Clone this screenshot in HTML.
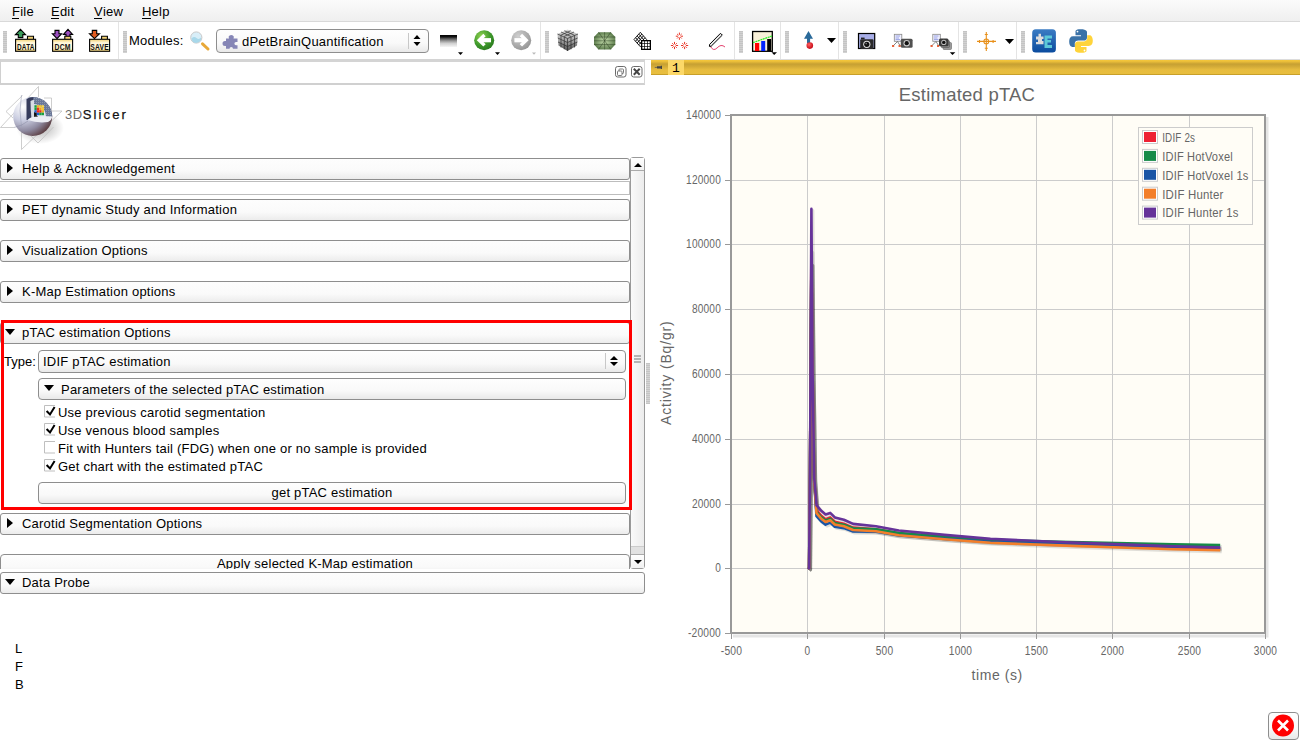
<!DOCTYPE html>
<html><head><meta charset="utf-8">
<style>
*{margin:0;padding:0;box-sizing:border-box}
html,body{width:1300px;height:743px;overflow:hidden;background:#fff;font-family:"Liberation Sans",sans-serif;font-size:13px;color:#000;letter-spacing:0.22px}
.a{position:absolute}
#menu{left:0;top:0;width:1300px;height:22px;background:linear-gradient(#fbfbfb,#efefef);border-bottom:1px solid #d9d9d9}
#menu span{position:absolute;top:4px}
#menu u{text-decoration:none;position:relative}#menu u::after{content:"";position:absolute;left:0;right:1px;top:14px;height:1px;background:#000}
#tb{left:0;top:22px;width:1300px;height:37px;background:#fff}
.sep{position:absolute;top:0;width:1px;height:37px;background:#e4e4e4}
.hdl{position:absolute;top:9px;width:4px;height:22px;background:repeating-linear-gradient(#c4c4c4 0 1px,#d2d2d2 1px 2px)}
.hdr{position:absolute;left:0;width:630px;height:22px;border:1px solid #8e8e8e;border-radius:3px;background:linear-gradient(#fdfdfd,#fafafa 60%,#ececec)}
.hdr .t{position:absolute;left:21px;top:2px}
.tri-r{position:absolute;left:6px;top:4px;width:0;height:0;border-top:5px solid transparent;border-bottom:5px solid transparent;border-left:6px solid #000}
.tri-d{position:absolute;left:4px;top:6px;width:0;height:0;border-left:5px solid transparent;border-right:5px solid transparent;border-top:6px solid #000}
.btn{position:absolute;border:1px solid #8e8e8e;border-radius:4px;background:linear-gradient(#fefefe,#f9f9f9 60%,#e9e9e9)}
.cb{position:absolute;left:44px;width:12px;height:12px;border:1px solid #bdbdbd;border-right-color:#fff}
.cbt{position:absolute;left:58px}
.chk{position:absolute;left:2px;top:-2px;font-size:12px;font-weight:bold;letter-spacing:0}
</style></head><body>

<!-- MENU -->
<div id="menu" class="a">
 <span style="left:12px"><u>F</u>ile</span>
 <span style="left:51px"><u>E</u>dit</span>
 <span style="left:94px"><u>V</u>iew</span>
 <span style="left:142px"><u>H</u>elp</span>
</div>

<!-- TOOLBAR -->
<div id="tb" class="a">
 <div class="hdl" style="left:3px"></div>
 <div class="sep" style="left:118px"></div>
 <div class="hdl" style="left:123px"></div>
 <div class="a" style="left:129px;top:11px">Modules:</div>
 <div class="btn" style="left:216px;top:7px;width:213px;height:24px;border-radius:4px"></div>
 <div class="a" style="left:242px;top:12px">dPetBrainQuantification</div>
 <div class="a" style="left:408px;top:11px;width:1px;height:16px;background:#c8c8c8"></div>
 <div class="sep" style="left:540px"></div>
 <div class="hdl" style="left:545px"></div>
 <div class="sep" style="left:734px"></div>
 <div class="hdl" style="left:739px"></div>
 <div class="sep" style="left:780px"></div>
 <div class="hdl" style="left:785px"></div>
 <div class="sep" style="left:838px"></div>
 <div class="hdl" style="left:843px"></div>
 <div class="sep" style="left:958px"></div>
 <div class="hdl" style="left:963px"></div>
 <div class="sep" style="left:1016px"></div>
 <div class="hdl" style="left:1021px"></div>
 <div id="icons" class="a" style="left:0;top:-22px">
<svg class="a" style="left:0;top:0" width="1300" height="60" viewBox="0 0 1300 60">
<defs>
 <linearGradient id="fold" x1="0" y1="0" x2="0" y2="1"><stop offset="0" stop-color="#f3d270"/><stop offset="0.3" stop-color="#fff8df"/><stop offset="0.75" stop-color="#fff3cf"/><stop offset="1" stop-color="#f0cf6a"/></linearGradient>
 <radialGradient id="grn" cx="0.35" cy="0.3" r="0.75"><stop offset="0" stop-color="#8fd050"/><stop offset="0.6" stop-color="#3f9a2c"/><stop offset="1" stop-color="#2a7a1e"/></radialGradient>
 <radialGradient id="gry" cx="0.35" cy="0.3" r="0.75"><stop offset="0" stop-color="#cfcfcf"/><stop offset="1" stop-color="#959595"/></radialGradient>
 <linearGradient id="grad" x1="0" y1="0" x2="0" y2="1"><stop offset="0" stop-color="#000"/><stop offset="0.15" stop-color="#111"/><stop offset="0.3" stop-color="#555"/><stop offset="0.5" stop-color="#999"/><stop offset="0.7" stop-color="#d0d0d0"/><stop offset="1" stop-color="#f6f6f6"/></linearGradient>
 <linearGradient id="ext" x1="0" y1="0" x2="0" y2="1"><stop offset="0" stop-color="#3b7cc4"/><stop offset="1" stop-color="#0a4b9e"/></linearGradient>
 <radialGradient id="ball" cx="0.4" cy="0.35" r="0.7"><stop offset="0" stop-color="#ff6060"/><stop offset="1" stop-color="#c00010"/></radialGradient>
 <radialGradient id="oct" cx="0.5" cy="0.5" r="0.6"><stop offset="0" stop-color="#c8e0b0"/><stop offset="1" stop-color="#4f7040"/></radialGradient>
 <linearGradient id="cube" x1="0" y1="0" x2="0" y2="1"><stop offset="0" stop-color="#d8d8d8"/><stop offset="0.5" stop-color="#a8a8a8"/><stop offset="1" stop-color="#505050"/></linearGradient>
</defs>
<!-- DATA -->
<g stroke="#000" stroke-width="1.1">
 <path d="M20.5 29.3 L25.6 34.6 H22.8 V37.6 H18.3 V34.6 H15.4 Z" fill="#3a9a5a"/>
 <path d="M27.5 38.9 V36.2 H33.5 V38.9" fill="#f3d270"/>
 <rect x="15.6" y="39.3" width="20" height="12" fill="url(#fold)"/>
</g>
<text x="25.8" y="49.6" font-size="9.6" font-weight="bold" text-anchor="middle" fill="#111" textLength="17.5" lengthAdjust="spacingAndGlyphs">DATA</text>
<!-- DCM -->
<g stroke="#000" stroke-width="1.1">
 <path d="M57 38.6 L52.4 33.7 H55 V30.4 H59 V33.7 H61.6 Z" fill="#9b4fc0"/>
 <path d="M68 29.3 L72.6 34.4 H70 V36.6 H66 V34.4 H63.4 Z" fill="#9b4fc0"/>
 <path d="M64.8 38.9 V36.2 H70.8 V38.9" fill="#f3d270"/>
 <rect x="52.6" y="39.3" width="20" height="12" fill="url(#fold)"/>
</g>
<text x="62.6" y="49.6" font-size="9.6" font-weight="bold" text-anchor="middle" fill="#111" textLength="16" lengthAdjust="spacingAndGlyphs">DCM</text>
<!-- SAVE -->
<g stroke="#000" stroke-width="1.1">
 <path d="M94.5 38.6 L89.5 33.7 H92.3 V30.4 H96.7 V33.7 H99.5 Z" fill="#e05a20"/>
 <path d="M101.6 38.9 V36.2 H107.4 V38.9" fill="#f3d270"/>
 <rect x="89.6" y="39.3" width="20" height="12" fill="url(#fold)"/>
</g>
<text x="99.6" y="49.6" font-size="9.6" font-weight="bold" text-anchor="middle" fill="#111" textLength="18.5" lengthAdjust="spacingAndGlyphs">SAVE</text>
<!-- magnifier -->
<line x1="202.5" y1="43.8" x2="208" y2="49" stroke="#e8a838" stroke-width="3" stroke-linecap="round"/>
<circle cx="196.3" cy="37.5" r="5.6" fill="#d8eef8" stroke="#c8c8c8" stroke-width="1"/>
<path d="M191.5 38.5 Q194 36 196.5 38 T201 37.5 V40 Q199 43 196 43 Q192 42.5 191.5 38.5Z" fill="#a8d8ea"/>
<!-- puzzle -->
<path d="M226 38.5 H229 A2.6 2.3 0 1 1 233.5 38.5 H237.5 V42 H236 A1.6 1.6 0 0 0 236 45.2 H237.5 V48.8 H233 A1.6 1.6 0 0 0 229.5 48.8 H226 V46 H225 A2.2 2.2 0 1 1 225 41 H226 Z" fill="#8686b6"/>
<!-- combo arrows -->
<path d="M413.5 39 L417 35 L420.5 39 Z M413.5 42 L417 46 L420.5 42 Z" fill="#000"/>
<!-- gradient -->
<rect x="440" y="35" width="17" height="12" fill="url(#grad)"/>
<path d="M458 52.3 H463 L460.5 55 Z" fill="#000"/>
<!-- green back -->
<circle cx="484.2" cy="40.2" r="10" fill="url(#grn)"/>
<path d="M484.5 35 L479.2 40.2 L484.5 45.4" fill="none" stroke="#fff" stroke-width="3.4"/><path d="M480 40.2 H491" stroke="#fff" stroke-width="4.2"/>
<path d="M495 52.3 H500 L497.5 55 Z" fill="#000"/>
<!-- gray fwd -->
<circle cx="521.2" cy="40.2" r="10" fill="url(#gry)"/>
<path d="M520.9 35 L526.2 40.2 L520.9 45.4" fill="none" stroke="#fff" stroke-width="3.4"/><path d="M525.4 40.2 H514.4" stroke="#fff" stroke-width="4.2"/>
<path d="M532 52.5 H536 L534 54.8 Z" fill="#bbb"/>
<!-- cube -->
<path d="M567.5 29.5 L578 34 L577 45.5 L567.5 51 L558.5 45.5 L557.5 34 Z" fill="url(#cube)"/>
<g stroke="#222" stroke-width="0.8" fill="none" opacity="0.8">
 <path d="M557.5 34 L567.5 38.5 L578 34 M567.5 38.5 V51"/>
 <path d="M561 35.5 V47.5 M564.3 37 V49.3 M571 37 V49.3 M574.5 35.5 V47.5"/>
 <path d="M557.8 38 L567.5 42.5 L577.7 38 M558 42 L567.5 46.5 L577.4 42"/>
 <path d="M561 32 L571 36.5 M564.3 30.7 L574.5 35.3 M574 32 L564 36.5 M570.7 30.7 L560.7 35.3"/>
</g>
<!-- octagon -->
<path d="M598.5 32.2 H610.8 L615.3 37 V44.6 L610.8 49.4 H598.5 L594 44.6 V37 Z" fill="url(#oct)"/>
<g stroke="#2a4020" stroke-width="0.7" fill="none" opacity="0.7"><path d="M604.6 32.2 V49.4 M594 40.8 H615.3 M598.5 32.2 L610.8 49.4 M610.8 32.2 L598.5 49.4 M594 37 H615.3 M594 44.6 H615.3"/></g>
<!-- grid -->
<g fill="none" stroke="#000" stroke-width="0.9">
 <path d="M634 39.5 L640.3 32.3 L646.6 39.5 L640.3 46.7 Z M635.6 37.7 L641.9 44.9 M637.2 35.9 L643.5 43.1 M638.8 34.1 L645.1 41.3 M645 37.7 L638.7 44.9 M643.4 35.9 L637.1 43.1 M641.8 34.1 L635.5 41.3"/>
</g>
<rect x="641" y="40" width="10" height="10" fill="#000"/>
<g fill="#fff"><rect x="642.3" y="41.3" width="2" height="2"/><rect x="645" y="41.3" width="2" height="2"/><rect x="647.7" y="41.3" width="2" height="2"/><rect x="642.3" y="44" width="2" height="2"/><rect x="645" y="44" width="2" height="2"/><rect x="647.7" y="44" width="2" height="2"/><rect x="642.3" y="46.7" width="2" height="2"/><rect x="645" y="46.7" width="2" height="2"/><rect x="647.7" y="46.7" width="2" height="2"/></g>
<!-- red stars -->
<g stroke="#e82818" stroke-width="0.95" fill="none" stroke-linecap="butt">
<path d="M680.70 36.20 L683.00 36.20 M680.32 37.12 L681.66 38.46 M679.40 37.50 L679.40 39.80 M678.48 37.12 L677.14 38.46 M678.10 36.20 L675.80 36.20 M678.48 35.28 L677.14 33.94 M679.40 34.90 L679.40 32.60 M680.32 35.28 L681.66 33.94"/>
<path d="M675.80 45.50 L678.10 45.50 M675.42 46.42 L676.76 47.76 M674.50 46.80 L674.50 49.10 M673.58 46.42 L672.24 47.76 M673.20 45.50 L670.90 45.50 M673.58 44.58 L672.24 43.24 M674.50 44.20 L674.50 41.90 M675.42 44.58 L676.76 43.24"/>
<path d="M685.90 45.50 L688.20 45.50 M685.52 46.42 L686.86 47.76 M684.60 46.80 L684.60 49.10 M683.68 46.42 L682.34 47.76 M683.30 45.50 L681.00 45.50 M683.68 44.58 L682.34 43.24 M684.60 44.20 L684.60 41.90 M685.52 44.58 L686.86 43.24"/>
</g>
<!-- pen -->
<path d="M710 45.5 Q713 52 717 48 Q721 43.5 725 47" fill="none" stroke="#e03060" stroke-width="0.9"/>
<path d="M720.5 33.3 L722.3 35.1 L711.2 46.2 L709.4 46.4 L709.6 44.4 Z" fill="#e8e8e8" stroke="#000" stroke-width="1"/>
<!-- chart icon -->
<rect x="752.6" y="31.5" width="19.7" height="19.8" fill="#f8f0d8" stroke="#000" stroke-width="1.3"/>
<rect x="755" y="43" width="4.2" height="8" fill="#ff0000"/>
<rect x="761.2" y="41" width="4" height="10" fill="#0022ff"/>
<rect x="767.2" y="39" width="4" height="12" fill="#000"/>
<line x1="753" y1="42.6" x2="772" y2="36" stroke="#22ee22" stroke-width="1.2" stroke-dasharray="2 0.6"/>
<path d="M771.5 52.2 H777 L774.2 55 Z" fill="#000"/>
<!-- arrow with ball -->
<path d="M808.5 31 L813 38.7 H810.1 V43 H807 V38.7 H804 Z" fill="#2a6a9a"/>
<circle cx="809.8" cy="45.6" r="3.3" fill="url(#ball)"/>
<path d="M827 38 H836 L831.5 43 Z" fill="#000"/>
<!-- camera 1 -->
<rect x="858.5" y="33.5" width="16.2" height="15" fill="#a8aee8" stroke="#000" stroke-width="1.2"/>
<rect x="861" y="37.6" width="3.6" height="1.6" fill="#222"/>
<rect x="860.2" y="39.3" width="13.4" height="9.6" rx="1.2" fill="#2a2a2a"/>
<circle cx="866.8" cy="44.3" r="3.6" fill="#e0e0e0"/><circle cx="866.8" cy="44.3" r="2.6" fill="#111"/><circle cx="866.2" cy="43.6" r="0.8" fill="#777"/>
<!-- camera 2 -->
<rect x="894.3" y="34.3" width="7.5" height="7" fill="#f0f0ff" stroke="#888" stroke-width="0.8"/>
<path d="M895.5 36 H900 M895.5 38 H899 M895.5 39.6 H900" stroke="#6070d0" stroke-width="0.6"/>
<path d="M897.5 41.5 L893.5 45.5 M897.5 41.5 L900 45.5" stroke="#666" stroke-width="0.8"/>
<rect x="892" y="45.2" width="2.2" height="1.6" fill="#e04010"/><rect x="898.5" y="45.2" width="2.2" height="1.6" fill="#e04010"/>
<rect x="900.8" y="38.7" width="11.8" height="9" rx="1.5" fill="#505050"/>
<circle cx="906.7" cy="43.2" r="3.2" fill="#c8c8c8"/><circle cx="906.7" cy="43.2" r="2.1" fill="#111"/>
<!-- camera 3 -->
<rect x="932.8" y="34.3" width="7.5" height="7" fill="#f0f0ff" stroke="#888" stroke-width="0.8"/>
<path d="M934 36 H938.5 M934 38 H937.5 M934 39.6 H938.5" stroke="#6070d0" stroke-width="0.6"/>
<path d="M936 41.5 L932 45.5 M936 41.5 L938.5 45.5" stroke="#666" stroke-width="0.8"/>
<rect x="930.5" y="45.2" width="2.2" height="1.6" fill="#e04010"/><rect x="937" y="45.2" width="2.2" height="1.6" fill="#e04010"/>
<rect x="943" y="42.5" width="8.5" height="7" rx="1" fill="#9a9a9a" stroke="#666" stroke-width="0.6"/>
<rect x="941" y="40.5" width="8.5" height="7" rx="1" fill="#8a8a8a" stroke="#555" stroke-width="0.6"/>
<rect x="939" y="38.6" width="9.5" height="7.6" rx="1.5" fill="#3a3a3a"/>
<circle cx="943.8" cy="42.4" r="2.6" fill="#bbb"/><circle cx="943.8" cy="42.4" r="1.7" fill="#111"/>
<path d="M949.8 52.2 H955.3 L952.5 55 Z" fill="#000"/>
<!-- crosshair -->
<g stroke="#e8901a" stroke-width="1.1" fill="none">
 <path d="M986.3 32 V51 M977 41.4 H996"/>
 <circle cx="986.3" cy="41.4" r="2.4"/>
 <path d="M984.8 34.5 H987.8 M984.8 48.3 H987.8 M979.5 39.9 V42.9 M993.1 39.9 V42.9"/>
</g>
<path d="M1005 39 H1014 L1009.5 44 Z" fill="#000"/>
<!-- extension -->
<rect x="1032.2" y="29.2" width="23.7" height="23.3" rx="3.5" fill="url(#ext)"/>
<path d="M1036 36.5 H1038.5 V33.8 H1041 V36.5 H1043.5 V39 H1042 V41 H1043.5 V44.3 H1036 V42 H1038 V39.5 H1036 Z" fill="#dcdcdc"/>
<path d="M1044.5 35.5 H1052 V38.5 H1047.5 V40 H1051 V42.5 H1047.5 V45 H1052 V48 H1044.5 Z" fill="#5cc8d8"/>
<!-- python -->
<path d="M1080.5 29.3 C1075 29.3 1075.5 31.6 1075.5 31.6 V35.2 H1081 V36.2 H1073.2 C1073.2 36.2 1069.2 35.8 1069.2 41.5 C1069.2 47.2 1072.7 46.9 1072.7 46.9 H1074.8 V44 C1074.8 44 1074.6 40.6 1078.2 40.6 H1083.8 C1083.8 40.6 1087 40.7 1087 37.5 V32.2 C1087 32.2 1087.5 29.3 1080.5 29.3 Z" fill="#3a72a8"/>
<circle cx="1077.5" cy="31.6" r="0.9" fill="#fff"/>
<path d="M1081.5 52.8 C1087 52.8 1086.5 50.5 1086.5 50.5 V46.9 H1081 V45.9 H1088.8 C1088.8 45.9 1092.8 46.3 1092.8 40.6 C1092.8 34.9 1089.3 35.2 1089.3 35.2 H1087.2 V38.1 C1087.2 38.1 1087.4 41.5 1083.8 41.5 H1078.2 C1078.2 41.5 1075 41.4 1075 44.6 V49.9 C1075 49.9 1074.5 52.8 1081.5 52.8 Z" fill="#ffd43b"/>
<circle cx="1084.5" cy="50.5" r="0.9" fill="#fff"/>
</svg>
</div>
</div>
<div class="a" style="left:0;top:59px;width:1300px;height:1px;background:#dcdcdc"></div>

<!-- LEFT PANEL -->
<div class="a" style="left:0;top:59px;width:645px;height:26px;border-top:3px solid #d4d4d4;border-bottom:2px solid #d0d0d0;border-left:1px solid #d0d0d0;border-right:1px solid #d6d6d6;background:#fff"></div>

<svg class="a" style="left:612px;top:63px" width="34" height="16" viewBox="612 63 34 16">
<rect x="615.5" y="66.5" width="10.5" height="10.5" rx="2.2" fill="#fff" stroke="#6a6a6a" stroke-width="1"/>
<rect x="619" y="69" width="4.5" height="4.5" rx="0.8" fill="none" stroke="#6a6a6a" stroke-width="0.9"/>
<rect x="617.5" y="71" width="4.5" height="4.5" rx="0.8" fill="#fff" stroke="#6a6a6a" stroke-width="0.9"/>
<rect x="631.5" y="66.5" width="10.5" height="10.5" rx="2.2" fill="#fff" stroke="#6a6a6a" stroke-width="1"/>
<path d="M633.8 68.8 L639.7 74.7 M639.7 68.8 L633.8 74.7" stroke="#444" stroke-width="2"/>
</svg>
<!--LOGO--><div id="logo">
<svg class="a" style="left:0;top:84px" width="70" height="72" viewBox="0 84 70 72">
<defs>
 <radialGradient id="sph" cx="0.25" cy="0.25" r="1"><stop offset="0" stop-color="#ffffff"/><stop offset="0.35" stop-color="#c9cce0"/><stop offset="0.62" stop-color="#8e8aa0"/><stop offset="0.85" stop-color="#5a3c40"/><stop offset="1" stop-color="#4a2a2a"/></radialGradient>
 <radialGradient id="shd" cx="0.5" cy="0.5" r="0.5"><stop offset="0" stop-color="#000" stop-opacity="0.3"/><stop offset="1" stop-color="#000" stop-opacity="0"/></radialGradient>
 <pattern id="gp" width="2" height="2" patternUnits="userSpaceOnUse"><rect width="2" height="2" fill="#6a7898"/><rect width="1" height="1" fill="#8a96b0"/></pattern>
</defs>
<ellipse cx="40" cy="128" rx="24" ry="16" fill="url(#shd)"/>
<g fill="none" stroke="#bdbdbd" stroke-width="0.75">
 <path d="M38.5 86.5 L0.5 127.5 H14"/>
 <path d="M38.5 86.5 V97"/>
 <path d="M22.5 95.5 L6 111.5 L13 118"/>
 <path d="M21.5 127 V149.5 L62 111 H52"/>
 <path d="M22 127 L38 143 L53.5 127"/>
 <path d="M44 98 H51.5 V111"/>
</g>
<circle cx="32.7" cy="116.5" r="19.5" fill="url(#sph)"/>
<!-- cutaway quadrant -->
<path d="M28 98 Q30 97 32.7 97 A19.5 19.5 0 0 1 52.2 116.5 Q45 121 28 120 Z" fill="url(#gp)"/>
<path d="M33 117 V104 A13 13 0 0 1 46 117 Z" fill="#e4e6ee"/><path d="M33 117 V110 L38 117 Z" fill="#202020"/>
<path d="M26.5 99 Q30 97 33.5 97.3 Q31 106 31.5 120 L26.5 120 Z" fill="#363c5c"/>
<path d="M30.5 101 Q32 100 34 100 V118 L31.5 118 Q30.5 110 30.5 101Z" fill="#d8dce4"/>
<g>
 <rect x="34.4" y="105.2" width="2.4" height="2.5" fill="#18a040"/><rect x="36.8" y="105.2" width="2.4" height="2.5" fill="#f0b020"/><rect x="39.2" y="105.2" width="2.4" height="2.5" fill="#f8c830"/><rect x="41.6" y="105.2" width="2.4" height="2.5" fill="#f8d850"/>
 <rect x="34.4" y="107.7" width="2.4" height="2.5" fill="#18a040"/><rect x="36.8" y="107.7" width="2.4" height="2.5" fill="#e83020"/><rect x="39.2" y="107.7" width="2.4" height="2.5" fill="#f0a020"/><rect x="41.6" y="107.7" width="2.4" height="2.5" fill="#f8c830"/>
 <rect x="34.4" y="110.2" width="2.4" height="2.5" fill="#2060d0"/><rect x="36.8" y="110.2" width="2.4" height="2.5" fill="#ff2010"/><rect x="39.2" y="110.2" width="2.4" height="2.5" fill="#e83020"/><rect x="41.6" y="110.2" width="2.4" height="2.5" fill="#f0b020"/>
 <rect x="34.4" y="112.7" width="2.4" height="2.5" fill="#101010"/><rect x="36.8" y="112.7" width="2.4" height="2.5" fill="#2060d0"/><rect x="39.2" y="112.7" width="2.4" height="2.5" fill="#18a040"/><rect x="41.6" y="112.7" width="2.4" height="2.5" fill="#18a040"/>
</g>
<path d="M27.5 120 Q31 116.5 36 116.8 Q46 116 52.2 116.5 Q51.5 120.5 48 122 Q38 123.5 27.5 120Z" fill="#eceef4"/>
<path d="M21.5 95 Q18.5 110 21.5 127" fill="none" stroke="#9ea2b8" stroke-width="0.6"/>
<path d="M14 127.5 Q22 126 28 121" fill="none" stroke="#8e90a8" stroke-width="0.6"/>
</svg>
</div><!--/LOGO-->
<div class="a" style="left:65px;top:107px;font-size:13px;letter-spacing:0.6px;color:#111;white-space:nowrap"><span style="color:#6a6a6a">3D</span><span style="letter-spacing:2.1px;-webkit-text-stroke:0.25px #111">Slicer</span></div>

<div class="hdr" style="top:158px"><div class="tri-r"></div><span class="t">Help &amp; Acknowledgement</span></div>
<div class="a" style="left:0;top:181px;width:630px;height:14px;border-top:1px solid #bdbdbd;border-bottom:1px solid #bdbdbd;border-right:1px solid #bdbdbd"></div>
<div class="hdr" style="top:199px"><div class="tri-r"></div><span class="t">PET dynamic Study and Information</span></div>
<div class="hdr" style="top:240px"><div class="tri-r"></div><span class="t">Visualization Options</span></div>
<div class="hdr" style="top:281px"><div class="tri-r"></div><span class="t">K-Map Estimation options</span></div>
<div class="hdr" style="top:322px;height:22px"><div class="tri-d"></div><span class="t">pTAC estimation Options</span></div>

<div class="a" style="left:4px;top:354px;letter-spacing:0">Type:</div>
<div class="btn" style="left:38px;top:350px;width:588px;height:23px"></div>
<div class="a" style="left:43px;top:354px">IDIF pTAC estimation</div>
<div class="a" style="left:605px;top:353px;width:1px;height:16px;background:#c8c8c8"></div>
<div class="a" style="left:610px;top:356px;border-left:4px solid transparent;border-right:4px solid transparent;border-bottom:4px solid #000"></div>
<div class="a" style="left:610px;top:362px;border-left:4px solid transparent;border-right:4px solid transparent;border-top:4px solid #000"></div>

<div class="btn" style="left:38px;top:378px;width:588px;height:22px"><div class="tri-d" style="left:5px"></div><span class="a" style="left:22px;top:3px">Parameters of the selected pTAC estimation</span></div>

<svg class="a" style="left:40px;top:400px" width="20" height="80" viewBox="40 400 20 80">
<path d="M55 405.5 H44.5 V417.0 H55" fill="none" stroke="#bfbfbf" stroke-width="1"/>
<path d="M46.6 411.0 L50 414.5 L54.6 407.0" fill="none" stroke="#000" stroke-width="2"/>
<path d="M55 423.5 H44.5 V435.0 H55" fill="none" stroke="#bfbfbf" stroke-width="1"/>
<path d="M46.6 429.0 L50 432.5 L54.6 425.0" fill="none" stroke="#000" stroke-width="2"/>
<path d="M55 441.5 H44.5 V453.0 H55" fill="none" stroke="#bfbfbf" stroke-width="1"/>
<path d="M55 459.5 H44.5 V471.0 H55" fill="none" stroke="#bfbfbf" stroke-width="1"/>
<path d="M46.6 465.0 L50 468.5 L54.6 461.0" fill="none" stroke="#000" stroke-width="2"/>
</svg>
<div class="cbt" style="top:405px">Use previous carotid segmentation</div>
<div class="cbt" style="top:423px">Use venous blood samples</div>
<div class="cbt" style="top:441px">Fit with Hunters tail (FDG) when one or no sample is provided</div>
<div class="cbt" style="top:459px">Get chart with the estimated pTAC</div>

<div class="btn" style="left:38px;top:482px;width:588px;height:22px"></div>
<div class="a" style="left:38px;top:485px;width:588px;text-align:center">get pTAC estimation</div>

<div class="a" style="left:1px;top:320px;width:631px;height:190px;border:3px solid #ff0000;z-index:5"></div>

<div class="hdr" style="top:513px"><div class="tri-r"></div><span class="t">Carotid Segmentation Options</span></div>

<div class="a" style="left:0;top:554px;width:630px;height:15px;overflow:hidden">
 <div class="btn" style="left:0;top:0;width:630px;height:22px"></div>
 <div class="a" style="left:0;top:2px;width:630px;text-align:center">Apply selected K-Map estimation</div>
</div>

<!-- scrollbar -->
<div class="a" style="left:630px;top:157px;width:15px;height:412px;border:1px solid #9a9a9a;border-radius:3px;background:linear-gradient(90deg,#fafafa,#ececec)"></div>
<div class="a" style="left:631px;top:158px;width:13px;height:13px;border-bottom:1px solid #aaa;background:linear-gradient(#fff,#f1f1f1)"></div>
<div class="a" style="left:633.5px;top:162.5px;border-left:4px solid transparent;border-right:4px solid transparent;border-bottom:4.5px solid #000"></div>
<div class="a" style="left:631px;top:546px;width:13px;height:8px;background:#e2e2e2;border-top:1px solid #ccc"></div>
<div class="a" style="left:631px;top:554px;width:13px;height:14px;border-top:1px solid #aaa;background:linear-gradient(#fff,#f1f1f1)"></div>
<div class="a" style="left:633.5px;top:559.5px;border-left:4px solid transparent;border-right:4px solid transparent;border-top:4.5px solid #000"></div>
<div class="a" style="left:634px;top:355px;width:7px;height:8px;background:repeating-linear-gradient(#b4b4b4 0 1.5px,transparent 1.5px 3px)"></div>

<div class="hdr" style="top:572px;width:645px;height:22px"><div class="tri-d"></div><span class="t">Data Probe</span></div>

<div class="a" style="left:15px;top:641px">L</div>
<div class="a" style="left:15px;top:659px">F</div>
<div class="a" style="left:15px;top:677px">B</div>

<!-- splitter -->
<div class="a" style="left:646px;top:363px;width:4px;height:41px;background:repeating-linear-gradient(#c4c4c4 0 1px,#d4d4d4 1px 2px)"></div>

<!-- VIEW BAR -->
<div class="a" style="left:651px;top:60px;width:649px;height:15px;background:linear-gradient(#f4c73b 0%,#efc13a 8%,#c6a033 27%,#d4ac38 45%,#e7bc3f 65%,#e8be3e 90%,#b8901f 100%)"></div>
<div class="a" style="left:668px;top:60px;width:16px;height:15px;background:#fcd868"></div>
<div class="a" style="left:672px;top:61px;font-family:'Liberation Mono',monospace;font-size:13px;letter-spacing:0">1</div>
<svg class="a" style="left:650px;top:62px" width="16" height="10" viewBox="650 62 16 10"><path d="M654.8 67.4 H657.5" stroke="#555" stroke-width="0.8"/><path d="M657 66.2 H661 V68.6 H657 Z M660.8 65.8 H662 V69 H660.8 Z" fill="#444"/></svg>

<div id="chart">
<svg class="a" style="left:0;top:0" width="1300" height="743" viewBox="0 0 1300 743">
<rect x="731" y="115" width="534" height="518" fill="#fffdf6"/>
<line x1="807.5" y1="116" x2="807.5" y2="632" stroke="#cccccc" stroke-width="1"/>
<line x1="884.5" y1="116" x2="884.5" y2="632" stroke="#cccccc" stroke-width="1"/>
<line x1="960.5" y1="116" x2="960.5" y2="632" stroke="#cccccc" stroke-width="1"/>
<line x1="1036.5" y1="116" x2="1036.5" y2="632" stroke="#cccccc" stroke-width="1"/>
<line x1="1112.5" y1="116" x2="1112.5" y2="632" stroke="#cccccc" stroke-width="1"/>
<line x1="1189.5" y1="116" x2="1189.5" y2="632" stroke="#cccccc" stroke-width="1"/>
<line x1="732" y1="568.5" x2="1264" y2="568.5" stroke="#cccccc" stroke-width="1"/>
<line x1="732" y1="504.5" x2="1264" y2="504.5" stroke="#cccccc" stroke-width="1"/>
<line x1="732" y1="439.5" x2="1264" y2="439.5" stroke="#cccccc" stroke-width="1"/>
<line x1="732" y1="374.5" x2="1264" y2="374.5" stroke="#cccccc" stroke-width="1"/>
<line x1="732" y1="309.5" x2="1264" y2="309.5" stroke="#cccccc" stroke-width="1"/>
<line x1="732" y1="244.5" x2="1264" y2="244.5" stroke="#cccccc" stroke-width="1"/>
<line x1="732" y1="180.5" x2="1264" y2="180.5" stroke="#cccccc" stroke-width="1"/>
<path d="M1267 117 V636 H733" fill="none" stroke="#000" stroke-opacity="0.1" stroke-width="3"/>
<rect x="731" y="115" width="534" height="518" fill="none" stroke="#999999" stroke-width="2"/>
<line x1="725" y1="633.5" x2="730" y2="633.5" stroke="#999" stroke-width="1"/>
<text x="721" y="636.8" text-anchor="end" font-size="12" fill="#666" textLength="33.0" lengthAdjust="spacingAndGlyphs">-20000</text>
<line x1="725" y1="568.5" x2="730" y2="568.5" stroke="#999" stroke-width="1"/>
<text x="721" y="571.8" text-anchor="end" font-size="12" fill="#666" textLength="5.8" lengthAdjust="spacingAndGlyphs">0</text>
<line x1="725" y1="504.5" x2="730" y2="504.5" stroke="#999" stroke-width="1"/>
<text x="721" y="507.8" text-anchor="end" font-size="12" fill="#666" textLength="29.1" lengthAdjust="spacingAndGlyphs">20000</text>
<line x1="725" y1="439.5" x2="730" y2="439.5" stroke="#999" stroke-width="1"/>
<text x="721" y="442.8" text-anchor="end" font-size="12" fill="#666" textLength="29.1" lengthAdjust="spacingAndGlyphs">40000</text>
<line x1="725" y1="374.5" x2="730" y2="374.5" stroke="#999" stroke-width="1"/>
<text x="721" y="377.8" text-anchor="end" font-size="12" fill="#666" textLength="29.1" lengthAdjust="spacingAndGlyphs">60000</text>
<line x1="725" y1="309.5" x2="730" y2="309.5" stroke="#999" stroke-width="1"/>
<text x="721" y="312.8" text-anchor="end" font-size="12" fill="#666" textLength="29.1" lengthAdjust="spacingAndGlyphs">80000</text>
<line x1="725" y1="244.5" x2="730" y2="244.5" stroke="#999" stroke-width="1"/>
<text x="721" y="247.8" text-anchor="end" font-size="12" fill="#666" textLength="34.9" lengthAdjust="spacingAndGlyphs">100000</text>
<line x1="725" y1="180.5" x2="730" y2="180.5" stroke="#999" stroke-width="1"/>
<text x="721" y="183.8" text-anchor="end" font-size="12" fill="#666" textLength="34.9" lengthAdjust="spacingAndGlyphs">120000</text>
<line x1="725" y1="115.5" x2="730" y2="115.5" stroke="#999" stroke-width="1"/>
<text x="721" y="118.8" text-anchor="end" font-size="12" fill="#666" textLength="34.9" lengthAdjust="spacingAndGlyphs">140000</text>
<line x1="731.5" y1="634" x2="731.5" y2="639" stroke="#999" stroke-width="1"/>
<text x="731.5" y="654.8" text-anchor="middle" font-size="12" fill="#666" textLength="21.4" lengthAdjust="spacingAndGlyphs">-500</text>
<line x1="807.5" y1="634" x2="807.5" y2="639" stroke="#999" stroke-width="1"/>
<text x="807.5" y="654.8" text-anchor="middle" font-size="12" fill="#666" textLength="5.8" lengthAdjust="spacingAndGlyphs">0</text>
<line x1="884.5" y1="634" x2="884.5" y2="639" stroke="#999" stroke-width="1"/>
<text x="884.5" y="654.8" text-anchor="middle" font-size="12" fill="#666" textLength="17.5" lengthAdjust="spacingAndGlyphs">500</text>
<line x1="960.5" y1="634" x2="960.5" y2="639" stroke="#999" stroke-width="1"/>
<text x="960.5" y="654.8" text-anchor="middle" font-size="12" fill="#666" textLength="23.3" lengthAdjust="spacingAndGlyphs">1000</text>
<line x1="1036.5" y1="634" x2="1036.5" y2="639" stroke="#999" stroke-width="1"/>
<text x="1036.5" y="654.8" text-anchor="middle" font-size="12" fill="#666" textLength="23.3" lengthAdjust="spacingAndGlyphs">1500</text>
<line x1="1112.5" y1="634" x2="1112.5" y2="639" stroke="#999" stroke-width="1"/>
<text x="1112.5" y="654.8" text-anchor="middle" font-size="12" fill="#666" textLength="23.3" lengthAdjust="spacingAndGlyphs">2000</text>
<line x1="1189.5" y1="634" x2="1189.5" y2="639" stroke="#999" stroke-width="1"/>
<text x="1189.5" y="654.8" text-anchor="middle" font-size="12" fill="#666" textLength="23.3" lengthAdjust="spacingAndGlyphs">2500</text>
<line x1="1265.5" y1="634" x2="1265.5" y2="639" stroke="#999" stroke-width="1"/>
<text x="1265.5" y="654.8" text-anchor="middle" font-size="12" fill="#666" textLength="23.3" lengthAdjust="spacingAndGlyphs">3000</text>
<polyline points="808.1,569.2 809.1,568.2 810.0,471.1 811.4,251.0 812.6,374.0 814.2,479.6 816.5,510.1 821.0,515.5 825.6,519.2 830.2,517.4 834.8,521.8 843.9,523.8 853.1,527.6 876.0,529.3 898.8,533.4 944.6,537.5 990.4,541.2 1059.0,544.0 1127.7,546.2 1173.5,547.5 1220.2,548.5" fill="none" stroke="#000" stroke-opacity="0.12" stroke-width="3" stroke-linejoin="round" transform="translate(1.5,1.5)"/>
<polyline points="808.1,569.2 809.1,568.2 810.0,471.1 811.4,263.9 812.6,374.0 814.2,480.3 816.5,511.8 821.0,517.0 825.6,520.6 830.2,518.7 834.8,523.0 843.9,524.7 853.1,528.3 876.0,529.3 898.8,533.1 944.6,536.6 990.4,539.8 1059.0,541.7 1127.7,543.4 1173.5,544.4 1220.2,545.1" fill="none" stroke="#000" stroke-opacity="0.12" stroke-width="3" stroke-linejoin="round" transform="translate(1.5,1.5)"/>
<polyline points="808.1,569.2 809.1,568.2 810.0,471.1 811.4,263.9 812.6,374.0 814.2,482.0 816.5,516.1 821.0,521.2 825.6,524.6 830.2,522.6 834.8,526.7 843.9,528.1 853.1,531.5 876.0,531.8 898.8,535.5 944.6,538.9 990.4,541.9 1059.0,543.8 1127.7,545.6 1173.5,546.7 1220.2,547.5" fill="none" stroke="#000" stroke-opacity="0.12" stroke-width="3" stroke-linejoin="round" transform="translate(1.5,1.5)"/>
<polyline points="808.1,569.2 809.1,568.2 810.0,471.1 811.4,263.9 812.6,374.0 814.2,480.8 816.5,513.1 821.0,518.4 825.6,522.0 830.2,520.2 834.8,524.5 843.9,526.3 853.1,530.0 876.0,531.3 898.8,535.3 944.6,539.3 990.4,542.8 1059.0,545.4 1127.7,547.8 1173.5,549.2 1220.2,550.3" fill="none" stroke="#000" stroke-opacity="0.12" stroke-width="3" stroke-linejoin="round" transform="translate(1.5,1.5)"/>
<polyline points="808.1,569.2 809.1,568.2 810.0,471.1 811.4,208.9 812.6,374.0 814.2,477.6 816.5,505.1 821.0,510.6 825.6,514.5 830.2,512.9 834.8,517.4 843.9,519.7 853.1,523.9 876.0,526.3 898.8,530.5 944.6,534.9 990.4,538.9 1059.0,542.0 1127.7,544.6 1173.5,546.2 1220.2,547.5" fill="none" stroke="#000" stroke-opacity="0.12" stroke-width="3" stroke-linejoin="round" transform="translate(1.5,1.5)"/>
<polyline points="808.1,569.2 809.1,568.2 810.0,471.1 811.4,251.0 812.6,374.0 814.2,479.6 816.5,510.1 821.0,515.5 825.6,519.2 830.2,517.4 834.8,521.8 843.9,523.8 853.1,527.6 876.0,529.3 898.8,533.4 944.6,537.5 990.4,541.2 1059.0,544.0 1127.7,546.2 1173.5,547.5 1220.2,548.5" fill="none" stroke="#ee2233" stroke-width="2.6" stroke-linejoin="round"/>
<polyline points="808.1,569.2 809.1,568.2 810.0,471.1 811.4,263.9 812.6,374.0 814.2,480.3 816.5,511.8 821.0,517.0 825.6,520.6 830.2,518.7 834.8,523.0 843.9,524.7 853.1,528.3 876.0,529.3 898.8,533.1 944.6,536.6 990.4,539.8 1059.0,541.7 1127.7,543.4 1173.5,544.4 1220.2,545.1" fill="none" stroke="#168a48" stroke-width="2.6" stroke-linejoin="round"/>
<polyline points="808.1,569.2 809.1,568.2 810.0,471.1 811.4,263.9 812.6,374.0 814.2,482.0 816.5,516.1 821.0,521.2 825.6,524.6 830.2,522.6 834.8,526.7 843.9,528.1 853.1,531.5 876.0,531.8 898.8,535.5 944.6,538.9 990.4,541.9 1059.0,543.8 1127.7,545.6 1173.5,546.7 1220.2,547.5" fill="none" stroke="#1a55a5" stroke-width="2.6" stroke-linejoin="round"/>
<polyline points="808.1,569.2 809.1,568.2 810.0,471.1 811.4,263.9 812.6,374.0 814.2,480.8 816.5,513.1 821.0,518.4 825.6,522.0 830.2,520.2 834.8,524.5 843.9,526.3 853.1,530.0 876.0,531.3 898.8,535.3 944.6,539.3 990.4,542.8 1059.0,545.4 1127.7,547.8 1173.5,549.2 1220.2,550.3" fill="none" stroke="#f37f2a" stroke-width="2.6" stroke-linejoin="round"/>
<polyline points="808.1,569.2 809.1,568.2 810.0,471.1 811.4,208.9 812.6,374.0 814.2,477.6 816.5,505.1 821.0,510.6 825.6,514.5 830.2,512.9 834.8,517.4 843.9,519.7 853.1,523.9 876.0,526.3 898.8,530.5 944.6,534.9 990.4,538.9 1059.0,542.0 1127.7,544.6 1173.5,546.2 1220.2,547.5" fill="none" stroke="#663399" stroke-width="2.6" stroke-linejoin="round"/>
<text x="967" y="101" text-anchor="middle" font-size="18.5" fill="#666">Estimated pTAC</text>
<text x="997" y="679.6" text-anchor="middle" font-size="14" fill="#666" textLength="51" lengthAdjust="spacing">time (s)</text>
<text transform="translate(671,373) rotate(-90)" text-anchor="middle" font-size="14" fill="#666" textLength="104" lengthAdjust="spacing">Activity (Bq/gr)</text>
<rect x="1138.5" y="127.5" width="114" height="97" fill="#fffdf6" stroke="#cccccc" stroke-width="1"/>
<rect x="1142.5" y="130.5" width="15" height="13" fill="#fff" stroke="#cccccc" stroke-width="1"/>
<rect x="1144" y="132.0" width="12" height="10" fill="#ee2233"/>
<text x="1162.2" y="141.8" font-size="12" fill="#666" textLength="33.0" lengthAdjust="spacingAndGlyphs">IDIF 2s</text>
<rect x="1142.5" y="149.4" width="15" height="13" fill="#fff" stroke="#cccccc" stroke-width="1"/>
<rect x="1144" y="150.9" width="12" height="10" fill="#168a48"/>
<text x="1162.2" y="160.7" font-size="12" fill="#666" textLength="70.7" lengthAdjust="spacingAndGlyphs">IDIF HotVoxel</text>
<rect x="1142.5" y="168.3" width="15" height="13" fill="#fff" stroke="#cccccc" stroke-width="1"/>
<rect x="1144" y="169.8" width="12" height="10" fill="#1a55a5"/>
<text x="1162.2" y="179.6" font-size="12" fill="#666" textLength="86.3" lengthAdjust="spacingAndGlyphs">IDIF HotVoxel 1s</text>
<rect x="1142.5" y="187.2" width="15" height="13" fill="#fff" stroke="#cccccc" stroke-width="1"/>
<rect x="1144" y="188.7" width="12" height="10" fill="#f37f2a"/>
<text x="1162.2" y="198.5" font-size="12" fill="#666" textLength="61.3" lengthAdjust="spacingAndGlyphs">IDIF Hunter</text>
<rect x="1142.5" y="206.1" width="15" height="13" fill="#fff" stroke="#cccccc" stroke-width="1"/>
<rect x="1144" y="207.6" width="12" height="10" fill="#663399"/>
<text x="1162.2" y="217.4" font-size="12" fill="#666" textLength="76.3" lengthAdjust="spacingAndGlyphs">IDIF Hunter 1s</text>
</svg>
</div>

<!-- close btn -->
<div class="btn" style="left:1268px;top:712px;width:31px;height:28px"></div>
<svg class="a" style="left:1268px;top:712px" width="31" height="28"><circle cx="15" cy="13.5" r="11" fill="#ff0000"/><path d="M10 8.5 L20 18.5 M20 8.5 L10 18.5" stroke="#fff" stroke-width="2.6"/></svg>

</body></html>
